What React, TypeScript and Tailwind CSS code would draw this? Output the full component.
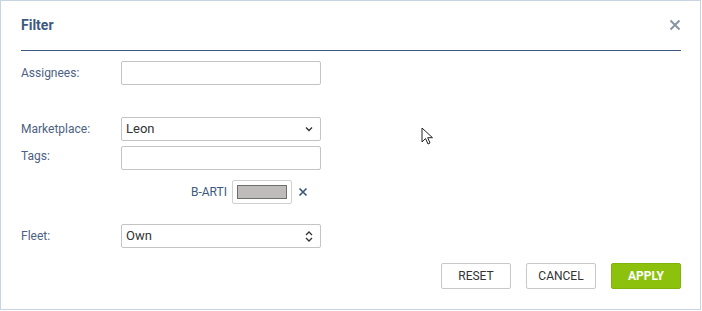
import React from "react";

const labelCls = "w-[100px] shrink-0 text-[12px] text-[#4c6282]";
const boxCls = "w-[200px] h-[24px] border border-[#c4c4c4] rounded-[2px] bg-white";

function Chevron() {
  return (
    <svg width="8" height="6" viewBox="0 0 8 6" className="text-[#333]">
      <path d="M1 1.5 L4 4.5 L7 1.5" fill="none" stroke="currentColor" strokeWidth="1.4" />
    </svg>
  );
}

function UpDown() {
  return (
    <svg width="8" height="11" viewBox="0 0 8 11" className="text-[#333]">
      <path d="M1 4 L4 1 L7 4" fill="none" stroke="currentColor" strokeWidth="1.3" />
      <path d="M1 7 L4 10 L7 7" fill="none" stroke="currentColor" strokeWidth="1.3" />
    </svg>
  );
}

export default function App() {
  return (
    <div
      className="relative w-[701px] h-[310px] border border-[#c9d4e3] bg-white overflow-hidden"
      style={{ fontFamily: "Roboto, 'Liberation Sans', sans-serif" }}
    >
      <div className="ml-[20px] mr-[19px] flex items-center justify-between border-b border-[#3d5a7e] pt-[14px] pb-[15px]">
        <div className="text-[14px] leading-[20px] font-bold text-[#3d5a7e]">Filter</div>
        <svg width="12" height="12" viewBox="0 0 12 12">
          <path d="M1.5 1.5 L10.5 10.5 M10.5 1.5 L1.5 10.5" stroke="#8a95a4" strokeWidth="2" />
        </svg>
      </div>

      <div className="pl-[20px] pr-[19px] pt-[10px] flex flex-col">
        <div className="flex items-center h-[24px]">
          <div className={labelCls}>Assignees:</div>
          <div className={boxCls} />
        </div>

        <div className="flex items-center h-[24px] mt-[32px]">
          <div className={labelCls}>Marketplace:</div>
          <div className={`${boxCls} flex items-center justify-between pl-[4px] pr-[7px]`}>
            <span className="text-[13px] text-[#333]">Leon</span>
            <Chevron />
          </div>
        </div>

        <div className="flex items-start h-[24px] mt-[5px]">
          <div className={`${labelCls} leading-[20px]`}>Tags:</div>
          <div className={boxCls} />
        </div>

        <div className="flex items-center h-[24px] mt-[10px] pl-[170px]">
          <span className="text-[12px] text-[#3d5a7e] mr-[5px]">B-ARTI</span>
          <div className="w-[60px] h-[24px] border border-[#d0d0d0] rounded-[2px] flex items-center justify-center">
            <div className="w-[50px] h-[14px] bg-[#c0bbbb] border border-[#6f6f6f]" />
          </div>
          <svg width="10" height="10" viewBox="0 0 10 10" className="ml-[6px]">
            <path d="M1.5 1.5 L8.5 8.5 M8.5 1.5 L1.5 8.5" stroke="#3d5a7e" strokeWidth="1.7" />
          </svg>
        </div>

        <div className="flex items-center h-[24px] mt-[20px]">
          <div className={labelCls}>Fleet:</div>
          <div className={`${boxCls} flex items-center justify-between pl-[4px] pr-[7px]`}>
            <span className="text-[13px] text-[#333]">Own</span>
            <UpDown />
          </div>
        </div>

        <div className="flex justify-end gap-[15px] mt-[15px]">
          <button className="w-[70px] h-[26px] border border-[#c8c8c8] rounded-[2px] bg-white text-[12px] text-[#333]">
            RESET
          </button>
          <button className="w-[70px] h-[26px] border border-[#c8c8c8] rounded-[2px] bg-white text-[12px] text-[#333]">
            CANCEL
          </button>
          <button className="w-[70px] h-[26px] border border-[#82b30c] rounded-[2px] bg-[#8cc10e] text-[12px] font-bold text-white">
            APPLY
          </button>
        </div>
      </div>

      <svg
        width="14"
        height="20"
        viewBox="0 0 14 20"
        className="absolute left-[420px] top-[126px]"
      >
        <path
          d="M1 1 L1 15 L4.5 11.5 L7 17 L9 16 L6.7 10.7 L11.5 10.7 Z"
          fill="white"
          stroke="#222"
          strokeWidth="1"
          strokeLinejoin="round"
        />
      </svg>
    </div>
  );
}
